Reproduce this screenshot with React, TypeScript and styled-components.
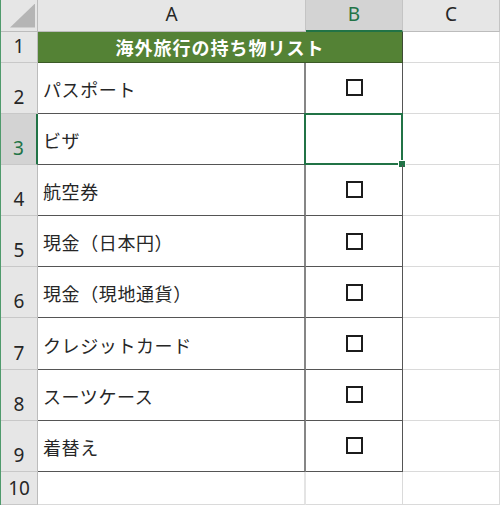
import React from 'react';
import styled, { createGlobalStyle, css } from 'styled-components';

const GlobalStyle = createGlobalStyle`
  html, body {
    margin: 0;
    padding: 0;
    background: #ffffff;
  }
  body {
    font-family: "Noto Sans CJK JP", "Noto Sans", sans-serif;
  }
`;

const GREEN = '#217346';

const Sheet = styled.div`
  display: grid;
  grid-template-columns: 37px 268px 97px 97px;
  grid-template-rows: 31.5px 31px repeat(8, 51.2px) 33px;
  width: 500px;
  height: 505px;
  overflow: hidden;
  border-left: 1px solid #4f9a6c;
  box-sizing: border-box;
  background: #ffffff;
`;

const Corner = styled.div`
  position: relative;
  background: #e6e6e6;
  border-right: 1px solid #bcbcbc;
  border-bottom: 1px solid #bcbcbc;

  &::after {
    content: '';
    position: absolute;
    right: 2px;
    bottom: 3px;
    width: 25px;
    height: 24px;
    background: #b5b5b5;
    clip-path: polygon(100% 0, 100% 100%, 0 100%);
  }
`;

const ColHeader = styled.div<{ $selected?: boolean }>`
  display: flex;
  align-items: center;
  justify-content: center;
  background: ${(p) => (p.$selected ? '#d3d3d3' : '#e6e6e6')};
  color: ${(p) => (p.$selected ? GREEN : '#262626')};
  font-family: "Noto Sans", "Liberation Sans", sans-serif;
  font-size: 19px;
  border-right: 1px solid #c4c4c4;
  border-bottom: ${(p) => (p.$selected ? `2px solid ${GREEN}` : '1px solid #bcbcbc')};
  box-sizing: border-box;
  padding-bottom: 2px;
`;

const RowHeader = styled.div<{ $selected?: boolean }>`
  display: flex;
  align-items: flex-end;
  justify-content: center;
  background: ${(p) => (p.$selected ? '#d3d3d3' : '#e6e6e6')};
  color: ${(p) => (p.$selected ? GREEN : '#262626')};
  font-family: "Noto Sans", "Liberation Sans", sans-serif;
  font-size: 19px;
  line-height: 1;
  padding-bottom: 6px;
  box-sizing: border-box;
  border-right: ${(p) => (p.$selected ? `2px solid ${GREEN}` : '1px solid #bcbcbc')};
  border-bottom: 1px solid #c8c8c8;
`;

const TitleCell = styled.div`
  grid-column: span 2;
  display: flex;
  align-items: center;
  justify-content: center;
  background: #548235;
  color: #ffffff;
  font-weight: 700;
  font-size: 18px;
  letter-spacing: 1px;
  border-right: 1px solid #3e4a35;
  border-bottom: 1px solid #3b5a27;
  box-sizing: border-box;
`;

const ItemCell = styled.div`
  display: flex;
  align-items: center;
  padding: 2px 0 0 5px;
  font-size: 18px;
  letter-spacing: 0.6px;
  color: #262626;
  border-right: 2px solid #868686;
  border-bottom: 1px solid #555555;
  box-sizing: border-box;
  white-space: nowrap;
`;

const CheckCell = styled.div<{ $active?: boolean }>`
  position: relative;
  display: flex;
  align-items: center;
  justify-content: center;
  border-right: 1px solid #555555;
  border-bottom: 1px solid #555555;
  box-sizing: border-box;
`;

const Box = styled.span`
  display: block;
  width: 17px;
  height: 17px;
  box-sizing: border-box;
  border: 2px solid #1c1c1c;
`;

const Selection = styled.div`
  position: absolute;
  left: -2px;
  top: -1px;
  right: -1px;
  bottom: -1px;
  border: 2px solid ${GREEN};
  pointer-events: none;

  &::after {
    content: '';
    position: absolute;
    right: -5px;
    bottom: -5px;
    width: 6px;
    height: 6px;
    background: ${GREEN};
    border: 1px solid #ffffff;
  }
`;

const EmptyCell = styled.div<{ $edge?: boolean }>`
  border-right: 1px solid #dadada;
  border-bottom: 1px solid #dadada;
  box-sizing: border-box;
  ${(p) =>
    p.$edge &&
    css`
      border-right-width: 2px;
      border-right-color: #e4e4e4;
    `}
`;

const items: { label: string; checked: boolean }[] = [
  { label: 'パスポート', checked: true },
  { label: 'ビザ', checked: false },
  { label: '航空券', checked: true },
  { label: '現金（日本円）', checked: true },
  { label: '現金（現地通貨）', checked: true },
  { label: 'クレジットカード', checked: true },
  { label: 'スーツケース', checked: true },
  { label: '着替え', checked: true },
];

export default function App() {
  return (
    <>
      <GlobalStyle />
      <Sheet>
        <Corner />
        <ColHeader>A</ColHeader>
        <ColHeader $selected>B</ColHeader>
        <ColHeader>C</ColHeader>

        <RowHeader>1</RowHeader>
        <TitleCell>海外旅行の持ち物リスト</TitleCell>
        <EmptyCell />

        {items.map((item, i) => {
          const row = i + 2;
          const active = row === 3;
          return (
            <React.Fragment key={row}>
              <RowHeader $selected={active}>{row}</RowHeader>
              <ItemCell>{item.label}</ItemCell>
              <CheckCell $active={active}>
                {item.checked && <Box />}
                {active && <Selection />}
              </CheckCell>
              <EmptyCell />
            </React.Fragment>
          );
        })}

        <RowHeader>10</RowHeader>
        <EmptyCell $edge />
        <EmptyCell />
        <EmptyCell />
      </Sheet>
    </>
  );
}
